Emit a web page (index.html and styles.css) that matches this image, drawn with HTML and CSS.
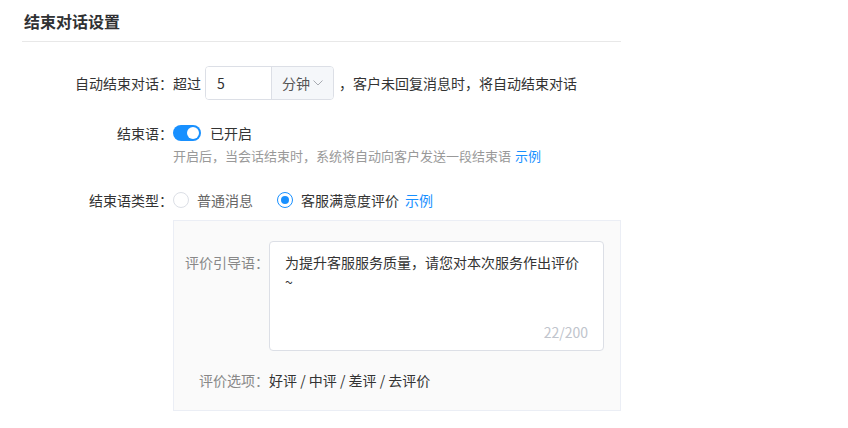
FILE: index.html
```html
<!DOCTYPE html>
<html lang="zh-CN">
<head>
  <meta charset="UTF-8">
  <meta name="viewport" content="width=device-width, initial-scale=1.0">
  <title>结束对话设置</title>
  <link rel="stylesheet" href="styles.css">
</head>
<body>
  <div class="panel">
    <div class="panel-title">结束对话设置</div>

    <div class="form-row row-auto">
      <div class="form-label">自动结束对话：</div>
      <div class="form-content">
        <span>超过</span>
        <div class="input-group">
          <div class="input-num">5</div>
          <div class="input-addon">
            分钟
            <svg width="10" height="6" viewBox="0 0 10 6"><path d="M0.5 0.5 L5 5 L9.5 0.5" fill="none" stroke="#a8abb2" stroke-width="1"/></svg>
          </div>
        </div>
        <span class="after-text">，客户未回复消息时，将自动结束对话</span>
      </div>
    </div>

    <div class="form-row row-end">
      <div class="form-label">结束语：</div>
      <div class="form-content">
        <span class="switch on"><span class="switch-knob"></span></span>
        <span class="switch-text">已开启</span>
      </div>
    </div>
    <div class="form-hint"><span class="hint-text">开启后，当会话结束时，系统将自动向客户发送一段结束语</span><a class="link hint-link" href="#">示例</a></div>

    <div class="form-row row-type">
      <div class="form-label">结束语类型：</div>
      <div class="form-content">
        <label class="radio">
          <span class="radio-dot"></span>
          <span class="radio-text">普通消息</span>
        </label>
        <label class="radio checked">
          <span class="radio-dot"></span>
          <span class="radio-text">客服满意度评价</span>
        </label>
        <a class="link type-link" href="#">示例</a>
      </div>
    </div>

    <div class="eval-box">
      <div class="eval-row">
        <div class="eval-label label-top">评价引导语：</div>
        <div class="textarea-wrap">
          <textarea class="textarea">为提升客服服务质量，请您对本次服务作出评价
~</textarea>
          <span class="counter">22/200</span>
        </div>
      </div>
      <div class="eval-row options-row">
        <div class="eval-label">评价选项：</div>
        <div class="options">好评 / 中评 / 差评 / 去评价</div>
      </div>
    </div>
  </div>
</body>
</html>
```

FILE: styles.css
```css
body {
  margin: 0;
  font-family: "Noto Sans CJK SC", "Noto Sans", sans-serif;
  font-size: 14px;
  color: #333;
  background: #fff;
}
.panel {
  width: 599px;
  margin-left: 22px;
}
.panel-title {
  height: 42px;
  padding-left: 2px;
  padding-top: 9px;
  box-sizing: border-box;
  font-size: 16px;
  line-height: 24px;
  font-weight: bold;
  color: #303133;
  border-bottom: 1px solid #e8e8e8;
}
.form-row {
  display: flex;
  align-items: center;
}
.form-label {
  width: 151px;
  text-align: right;
  line-height: 20px;
  flex-shrink: 0;
}
.form-content {
  display: flex;
  align-items: center;
  line-height: 20px;
}
.row-auto {
  margin-top: 24px;
  height: 34px;
}
.input-group {
  display: flex;
  height: 34px;
  margin-left: 4px;
  border: 1px solid #dcdfe6;
  border-radius: 4px;
  box-sizing: border-box;
  overflow: hidden;
}
.input-num {
  width: 54px;
  padding-left: 11px;
  line-height: 32px;
  color: #333;
  background: #fff;
}
.input-addon {
  display: flex;
  align-items: center;
  gap: 3px;
  padding: 0 10px 0 10px;
  border-left: 1px solid #dcdfe6;
  background: #f5f7fa;
  color: #555;
}
.after-text {
  margin-left: 5px;
}
.row-end {
  margin-top: 23px;
}
.switch {
  position: relative;
  display: inline-block;
  width: 28px;
  height: 16px;
  border-radius: 8px;
  background: #dcdfe6;
}
.switch.on {
  background: #1890ff;
}
.switch-knob {
  position: absolute;
  top: 2px;
  left: 2px;
  width: 12px;
  height: 12px;
  border-radius: 50%;
  background: #fff;
}
.switch.on .switch-knob {
  left: 14px;
}
.switch-text {
  margin-left: 9px;
}
.form-hint {
  display: flex;
  margin-top: 4px;
  margin-left: 151px;
  font-size: 13px;
  line-height: 18px;
  color: #999;
}
.link {
  color: #1890ff;
  text-decoration: none;
}
.hint-link {
  margin-left: 4px;
}
.row-type {
  margin-top: 25px;
}
.radio {
  display: flex;
  align-items: center;
  margin-right: 24px;
  cursor: pointer;
}
.radio.checked {
  margin-right: 6px;
}
.radio-dot {
  position: relative;
  width: 16px;
  height: 16px;
  border: 1px solid #dcdfe6;
  border-radius: 50%;
  box-sizing: border-box;
  background: #fff;
}
.radio.checked .radio-dot {
  border-color: #1890ff;
}
.radio.checked .radio-dot::after {
  content: "";
  position: absolute;
  top: 3px;
  left: 3px;
  width: 8px;
  height: 8px;
  border-radius: 50%;
  background: #1890ff;
}
.radio-text {
  margin-left: 8px;
  color: #666;
}
.radio.checked .radio-text {
  color: #333;
}
.eval-box {
  margin-top: 10px;
  margin-left: 151px;
  width: 448px;
  padding: 20px 0 20px 0;
  box-sizing: border-box;
  background: #fafafa;
  border: 1px solid #ebeef5;
}
.eval-row {
  display: flex;
}
.eval-label {
  width: 95px;
  flex-shrink: 0;
  text-align: right;
  line-height: 20px;
  color: #888;
}
.label-top {
  margin-top: 11px;
}
.textarea-wrap {
  position: relative;
  width: 335px;
  height: 110px;
}
.textarea {
  display: block;
  width: 100%;
  height: 100%;
  box-sizing: border-box;
  padding: 10px 15px;
  border: 1px solid #dcdfe6;
  border-radius: 4px;
  background: #fff;
  font-family: inherit;
  font-size: 14px;
  line-height: 20px;
  color: #333;
  resize: none;
  outline: none;
  overflow: hidden;
}
.counter {
  position: absolute;
  right: 16px;
  bottom: 9px;
  line-height: 20px;
  color: #c0c4cc;
}
.options-row {
  margin-top: 19px;
}
.options {
  line-height: 20px;
  color: #333;
}
```
